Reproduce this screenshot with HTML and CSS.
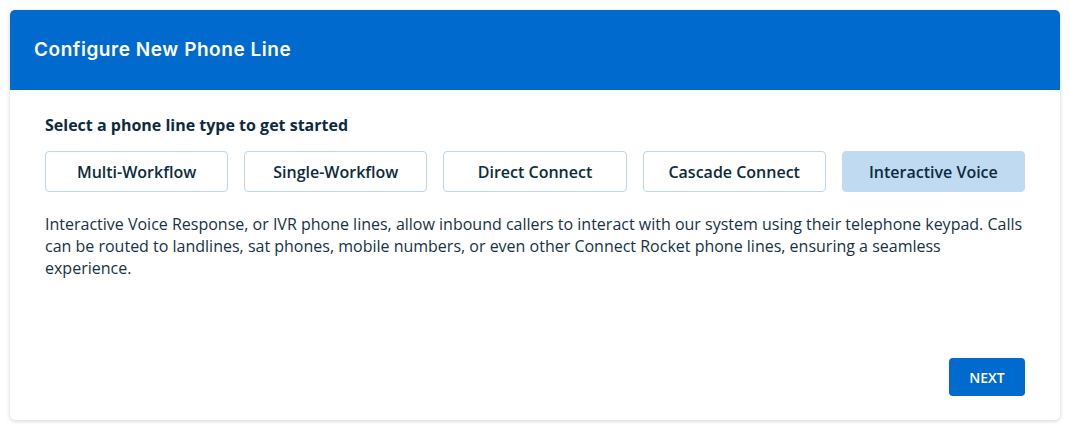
FILE: index.html
```html
<!DOCTYPE html>
<html lang="en">
<head>
  <meta charset="UTF-8">
  <title>Configure New Phone Line</title>
  <link rel="stylesheet" href="styles.css">
</head>
<body>

  <div class="card">
    <div class="card-header">
      <h2>Configure New Phone Line</h2>
    </div>
    <div class="card-body">
      <p class="prompt">Select a phone line type to get started</p>
      <div class="types">
        <button class="type">Multi-Workflow</button>
        <button class="type">Single-Workflow</button>
        <button class="type">Direct Connect</button>
        <button class="type">Cascade Connect</button>
        <button class="type active">Interactive Voice</button>
      </div>
      <p class="description">
        Interactive Voice Response, or IVR phone lines, allow inbound callers to interact with our system using their telephone keypad. Calls can be routed to landlines, sat phones, mobile numbers, or even other Connect Rocket phone lines, ensuring a seamless experience.
      </p>
      <div class="actions">
        <button class="next">NEXT</button>
      </div>
    </div>
  </div>

</body>
</html>
```

FILE: styles.css
```css
body {
  margin: 0;
  padding: 10px;
  background-color: #fff;
  font-family: "Open Sans", Arial, sans-serif;
  color: #0d2b3e;
}
.card {
  border-radius: 5px;
  overflow: hidden;
  background: #fff;
  box-shadow: 0 1px 4px rgba(0, 0, 0, 0.18);
}
.card-header {
  background-color: #006acf;
  height: 80px;
  padding: 0 24px;
  display: flex;
  align-items: center;
}
.card-header h2 {
  margin: 0 0 2px;
  color: #fff;
  font-family: Inter, "Open Sans", sans-serif;
  font-size: 19px;
  font-weight: 600;
  letter-spacing: 0.55px;
}
.card-body {
  padding: 24px 35px 24px;
}
.prompt {
  margin: 0;
  font-size: 16px;
  font-weight: 700;
  line-height: 22px;
}
.types {
  display: grid;
  grid-template-columns: repeat(5, 1fr);
  gap: 16px;
  margin-top: 15px;
}
.type {
  height: 41px;
  border: 1px solid #bcd6ef;
  border-radius: 4px;
  background: #fff;
  font-family: "Open Sans", Arial, sans-serif;
  font-size: 16px;
  font-weight: 600;
  color: #0d2b3e;
  cursor: pointer;
}
.type.active {
  background-color: #c0daf2;
  border-color: #c0daf2;
}
.description {
  margin: 21px 0 0;
  font-size: 16px;
  line-height: 22px;
  color: #173246;
}
.actions {
  display: flex;
  justify-content: flex-end;
  margin-top: 79px;
}
.next {
  width: 76px;
  height: 38px;
  border: none;
  border-radius: 4px;
  background-color: #006acf;
  color: #fff;
  font-family: "Open Sans", Arial, sans-serif;
  font-size: 14px;
  font-weight: 600;
  cursor: pointer;
}
```
